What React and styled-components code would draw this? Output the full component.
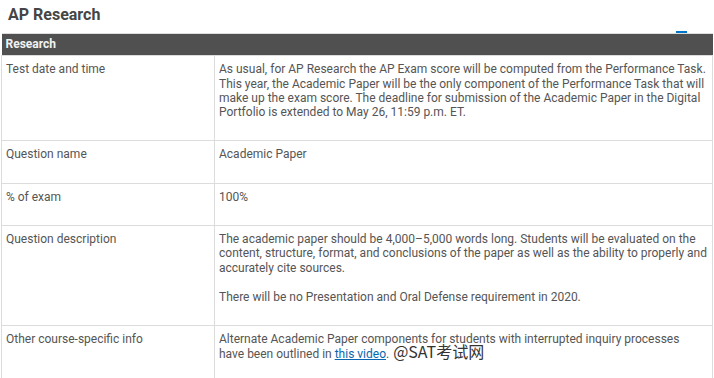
import React from "react";
import styled, { createGlobalStyle } from "styled-components";

const Global = createGlobalStyle`
  html, body { margin: 0; padding: 0; background: #fff; }
  body { font-family: Roboto, "Noto Sans CJK SC", sans-serif; }
`;

const Page = styled.div`
  position: relative;
  padding: 4px 1px 0 1px;
  width: 714px;
  box-sizing: border-box;
`;

const Title = styled.h2`
  margin: 0 0 0 7px;
  font-family: Roboto, sans-serif;
  font-weight: 700;
  font-size: 16px;
  line-height: 22px;
  color: #454545;
`;

const BlueDash = styled.span`
  position: absolute;
  left: 676px;
  top: 31px;
  width: 11px;
  height: 2px;
  background: #0077c8;
`;

const Table = styled.table`
  margin-top: 7px;
  width: 712px;
  border-collapse: collapse;
  table-layout: fixed;
  font-family: Roboto, "Noto Sans CJK SC", sans-serif;
  font-size: 12px;
  line-height: 14.3px;
  color: #555;
  border-top: 1px solid #ddd;
`;

const HeadCell = styled.th`
  background: #505050;
  color: #f2f2f2;
  font-weight: 700;
  font-size: 12px;
  text-align: left;
  padding: 3px 4px 4px;
  height: 13px;
`;

const Cell = styled.td`
  border: 1px solid #dcdcdc;
  vertical-align: top;
  padding: 6px 5px 6px 4px;
`;

const Para = styled.p`
  margin: 0 0 15px;
`;

const Link = styled.a`
  color: #0a66b0;
  text-decoration: underline;
`;

const Watermark = styled.span`
  font-family: "Noto Sans CJK SC", sans-serif;
  font-size: 16px;
  line-height: 0;
  color: #333;
  margin-left: 4px;
`;

const rows = [
  {
    label: "Test date and time",
    content: [
      "As usual, for AP Research the AP Exam score will be computed from the Performance Task. This year, the Academic Paper will be the only component of the Performance Task that will make up the exam score. The deadline for submission of the Academic Paper in the Digital Portfolio is extended to May 26, 11:59 p.m. ET.",
    ],
  },
  { label: "Question name", content: ["Academic Paper"] },
  { label: "% of exam", content: ["100%"] },
  {
    label: "Question description",
    content: [
      "The academic paper should be 4,000–5,000 words long. Students will be evaluated on the content, structure, format, and conclusions of the paper as well as the ability to properly and accurately cite sources.",
      "There will be no Presentation and Oral Defense requirement in 2020.",
    ],
  },
];

export default function App() {
  return (
    <>
      <Global />
      <Page>
        <Title>AP Research</Title>
        <BlueDash />
        <Table>
          <colgroup>
            <col style={{ width: "213px" }} />
            <col />
          </colgroup>
          <thead>
            <tr>
              <HeadCell colSpan={2}>Research</HeadCell>
            </tr>
          </thead>
          <tbody>
            {rows.map((r) => (
              <tr key={r.label}>
                <Cell>{r.label}</Cell>
                <Cell>
                  {r.content.map((c, i) => (
                    <Para key={i}>{c}</Para>
                  ))}
                </Cell>
              </tr>
            ))}
            <tr>
              <Cell>Other course-specific info</Cell>
              <Cell>
                <Para>
                  Alternate Academic Paper components for students with interrupted inquiry processes have been outlined in{" "}
                  <Link href="#">this video</Link>.
                  <Watermark>@SAT考试网</Watermark>
                </Para>
              </Cell>
            </tr>
          </tbody>
        </Table>
      </Page>
    </>
  );
}
